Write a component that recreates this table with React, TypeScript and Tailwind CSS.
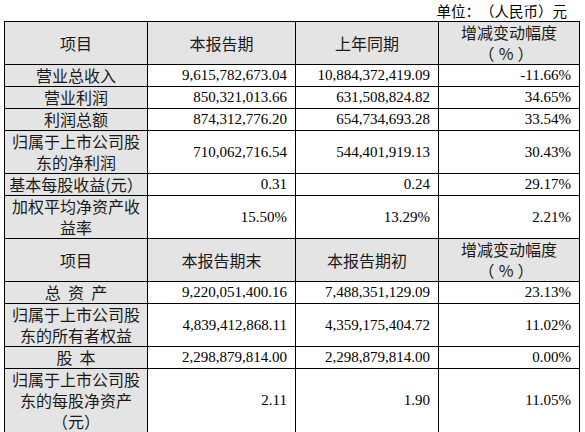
type Row = {
  label: string[];
  values: string[];
  h: string;
};

const top: Row[] = [
  { label: ["营业总收入"], values: ["9,615,782,673.04", "10,884,372,419.09", "-11.66%"], h: "h-[22px]" },
  { label: ["营业利润"], values: ["850,321,013.66", "631,508,824.82", "34.65%"], h: "h-[22px]" },
  { label: ["利润总额"], values: ["874,312,776.20", "654,734,693.28", "33.54%"], h: "h-[21px]" },
  { label: ["归属于上市公司股", "东的净利润"], values: ["710,062,716.54", "544,401,919.13", "30.43%"], h: "h-[43px]" },
  { label: ["基本每股收益(元）"], values: ["0.31", "0.24", "29.17%"], h: "h-[22px]" },
  { label: ["加权平均净资产收", "益率"], values: ["15.50%", "13.29%", "2.21%"], h: "h-[43px]" },
];

const bottom: Row[] = [
  { label: ["总  资  产"], values: ["9,220,051,400.16", "7,488,351,129.09", "23.13%"], h: "h-[22px]" },
  { label: ["归属于上市公司股", "东的所有者权益"], values: ["4,839,412,868.11", "4,359,175,404.72", "11.02%"], h: "h-[42px]" },
  { label: ["股  本"], values: ["2,298,879,814.00", "2,298,879,814.00", "0.00%"], h: "h-[22px]" },
  { label: ["归属于上市公司股", "东的每股净资产", "（元）"], values: ["2.11", "1.90", "11.05%"], h: "h-[63px]" },
];

const cjk = { fontFamily: '"Noto Sans CJK SC", "Liberation Serif", sans-serif' };
const cell = "border border-black p-0 align-middle";

const Header = ({ cols, h }: { cols: string[]; h: string }) => (
  <tr className={`${h} bg-[#e4e4e4]`} style={cjk}>
    {cols.map((c) => (
      <td key={c} className={`${cell} text-center text-[16px] text-[#1a1a1a]`}>
        {c}
      </td>
    ))}
    <td className={`${cell} text-center text-[16px] text-[#1a1a1a]`}>
      <div>增减变动幅度</div>
      <div className="pr-[6px]">
        （<span className="mx-[4px]">%</span>）
      </div>
    </td>
  </tr>
);

const Body = ({ row }: { row: Row }) => (
  <tr className={row.h}>
    <td
      className={`${cell} bg-[#e4e4e4] text-center text-[16px] text-[#1a1a1a] whitespace-pre`}
      style={cjk}
    >
      {row.label.map((l, i) => (
        <div key={i}>{l}</div>
      ))}
    </td>
    {row.values.map((v, i) => (
      <td key={i} className={`${cell} pr-[8px] text-right text-[15px]`}>
        {v}
      </td>
    ))}
  </tr>
);

export default function App() {
  return (
    <div
      className="w-[585px] h-[432px] bg-white text-black leading-[21px] [text-spacing-trim:space-all]"
      style={{ fontFamily: '"Liberation Serif", "Noto Sans CJK SC", serif' }}
    >
      <div className="h-[21px] pr-[18px] text-right text-[14.5px]" style={cjk}>
        单位：（人民币）元
      </div>
      <table className="ml-[4px] w-[575px] table-fixed border-collapse">
        <colgroup>
          <col className="w-[143px]" />
          <col className="w-[148px]" />
          <col className="w-[143px]" />
          <col className="w-[141px]" />
        </colgroup>
        <tbody>
          <Header cols={["项目", "本报告期", "上年同期"]} h="h-[42px]" />
          {top.map((r) => (
            <Body key={r.values[0]} row={r} />
          ))}
          <Header cols={["项目", "本报告期末", "本报告期初"]} h="h-[43px]" />
          {bottom.map((r) => (
            <Body key={r.values[0]} row={r} />
          ))}
        </tbody>
      </table>
    </div>
  );
}
